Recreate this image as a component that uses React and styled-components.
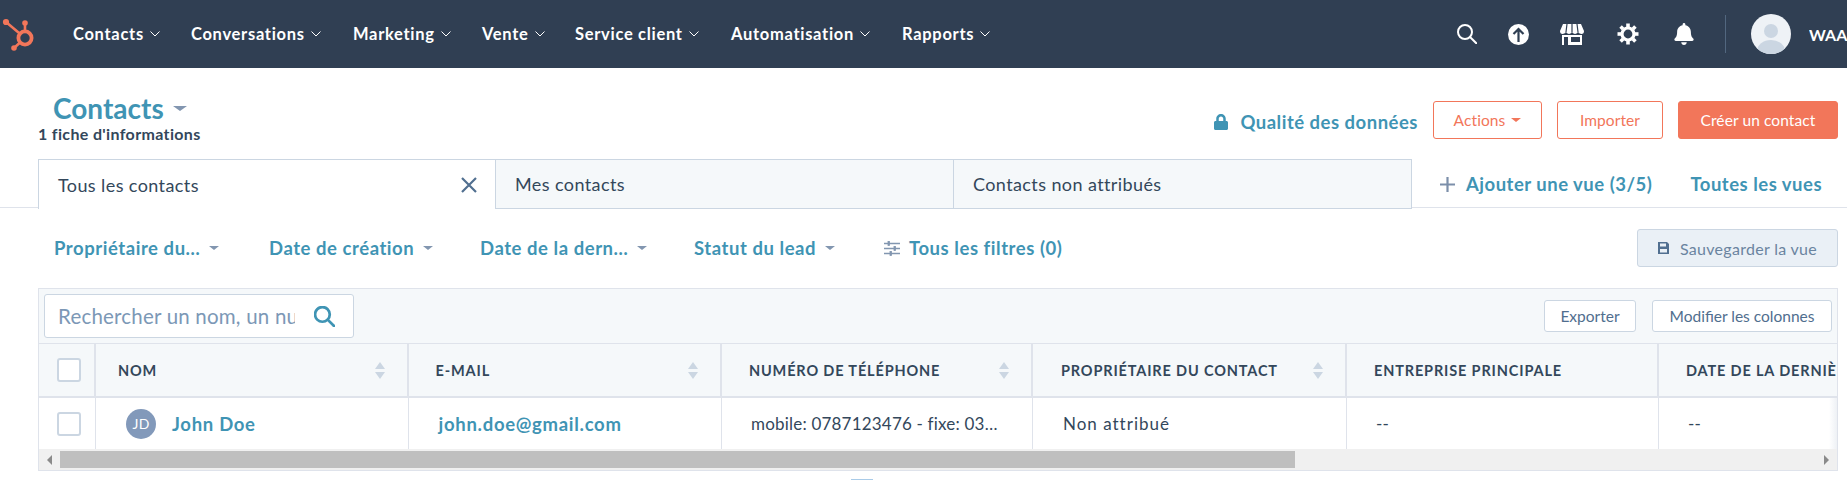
import React from 'react'
import styled, { createGlobalStyle } from 'styled-components'
import { FaBell, FaLock } from 'react-icons/fa'

const teal = '#3f94b4'
const coral = '#f2765a'
const slate = '#33475b'
const line = '#dfe3eb'
const edge = '#cbd6e2'
const font = '"Lato", "Noto Sans", sans-serif'

const GlobalStyle = createGlobalStyle`
  html, body {
    margin: 0;
    height: 481px;
    overflow: hidden;
    background: #fff;
    font-family: ${font};
    color: ${slate};
  }
`

const TopNav = styled.nav`
  display: flex;
  align-items: center;
  height: 68px;
  background: #303f53;
  color: #fff;
`

const LogoBox = styled.div`
  width: 73px;
  height: 68px;
  flex: none;
`

const NavItem = styled.a`
  display: flex;
  align-items: center;
  gap: 6px;
  width: ${p => p.$w}px;
  padding-bottom: 1px;
  font-size: 16.5px;
  font-weight: 700;
  letter-spacing: 0.7px;
  white-space: nowrap;
`

const NavIcons = styled.div`
  display: flex;
  align-items: center;
  margin-left: auto;
  height: 68px;
`

const NavIcon = styled.span`
  display: flex;
  justify-content: center;
  width: ${p => p.$w}px;
`

const NavDivider = styled.span`
  width: 1px;
  height: 38px;
  margin: 0 25px 0 13px;
  background: #52677f;
`

const UserAvatar = styled.span`
  display: block;
  width: 40px;
  height: 40px;
  border-radius: 50%;
  overflow: hidden;
  flex: none;
`

const UserName = styled.span`
  margin-left: 18px;
  width: 38px;
  overflow: hidden;
  font-size: 16px;
  font-weight: 700;
`

const PageHeader = styled.header`
  display: flex;
  justify-content: space-between;
  height: 91px;
  padding: 0 9px 0 38px;
`

const TitleBlock = styled.div`
  padding-top: 24px;
`

const Title = styled.h1`
  display: flex;
  align-items: center;
  gap: 9px;
  margin: 0 0 0 15px;
  height: 32px;
  font-size: 28px;
  font-weight: 700;
  color: ${teal};
`

const Caret = styled.span`
  display: inline-block;
  flex: none;
  width: 0;
  height: 0;
  border-left: ${p => p.$size}px solid transparent;
  border-right: ${p => p.$size}px solid transparent;
  border-top: ${p => p.$size * 0.8}px solid ${p => p.$color || '#8296b0'};
`

const RecordCount = styled.p`
  margin: 1px 0 0;
  font-size: 16px;
  font-weight: 700;
  letter-spacing: 0.35px;
  line-height: 18px;
`

const HeaderActions = styled.div`
  display: flex;
  align-items: flex-start;
  padding-top: 33px;
`

const QualityLink = styled.a`
  display: flex;
  align-items: center;
  gap: 11px;
  height: 42px;
  margin-right: 15px;
  font-size: 18.5px;
  font-weight: 700;
  letter-spacing: 0.5px;
  color: ${teal};
`

const CoralButton = styled.button`
  display: flex;
  align-items: center;
  justify-content: center;
  gap: 6px;
  width: ${p => p.$w}px;
  height: 38px;
  margin-left: ${p => p.$ml || 0}px;
  border: 1px solid ${coral};
  border-radius: 3px;
  background: ${p => (p.$solid ? coral : '#fff')};
  color: ${p => (p.$solid ? '#fff' : coral)};
  font-family: ${font};
  font-size: 15.5px;
  letter-spacing: 0.1px;
`

const TabBar = styled.div`
  display: flex;
  align-items: flex-start;
  height: 48px;
  padding-left: 38px;
  border-bottom: 1px solid ${line};
`

const Tab = styled.div`
  display: flex;
  align-items: center;
  justify-content: space-between;
  box-sizing: border-box;
  width: ${p => p.$w}px;
  height: 50px;
  padding: 0 18px 0 19px;
  border: 1px solid ${edge};
  border-left-width: ${p => (p.$active ? 1 : 0)}px;
  border-bottom-width: ${p => (p.$active ? 0 : 1)}px;
  background: ${p => (p.$active ? '#fff' : '#f5f8fa')};
  font-size: 18px;
  letter-spacing: 0.4px;
`

const TabActions = styled.div`
  display: flex;
  align-items: center;
  height: 50px;
  padding-left: 28px;
  font-size: 18.5px;
  font-weight: 700;
  letter-spacing: 0.5px;
  color: ${teal};
`

const AddView = styled.a`
  display: flex;
  align-items: center;
  gap: 11px;
  margin-right: 38px;
`

const FilterBar = styled.div`
  display: flex;
  align-items: center;
  height: 80px;
  padding: 0 9px 0 54px;
`

const Filter = styled.a`
  display: flex;
  align-items: center;
  gap: 9px;
  width: ${p => p.$w}px;
  font-size: 18.5px;
  font-weight: 700;
  letter-spacing: 0.55px;
  color: ${teal};
  white-space: nowrap;
`

const SaveButton = styled.button`
  display: flex;
  align-items: center;
  justify-content: center;
  gap: 11px;
  width: 201px;
  height: 38px;
  margin-left: auto;
  border: 1px solid ${edge};
  border-radius: 3px;
  background: #eaf0f6;
  color: #6a84a0;
  font-family: ${font};
  font-size: 16px;
  letter-spacing: 0.3px;
`

const TableCard = styled.section`
  margin: 0 9px 0 38px;
  border: 1px solid ${line};
  border-top-width: 1px;
`

const TableToolbar = styled.div`
  display: flex;
  align-items: center;
  justify-content: space-between;
  height: 54px;
  padding: 0 5px;
  background: #f5f8fa;
`

const SearchBox = styled.div`
  display: flex;
  align-items: center;
  justify-content: space-between;
  box-sizing: border-box;
  width: 310px;
  height: 44px;
  padding: 0 18px 0 13px;
  border: 1px solid ${edge};
  border-radius: 3px;
  background: #fff;
  color: #7c98b6;
  font-size: 20.5px;
  letter-spacing: 0.2px;
`

const SearchText = styled.span`
  width: 237px;
  overflow: hidden;
  white-space: nowrap;
`

const ToolButtons = styled.div`
  display: flex;
  gap: 16px;
`

const ToolButton = styled.button`
  width: ${p => p.$w}px;
  height: 32px;
  border: 1px solid ${edge};
  border-radius: 3px;
  background: #fff;
  color: #506e8e;
  font-family: ${font};
  font-size: 15.5px;
`

const Row = styled.div`
  display: grid;
  grid-template-columns: 57px 312.6px 313.4px 311px 314px 312px 1fr;
  height: ${p => p.$h}px;
  box-sizing: border-box;
`

const HeadRow = styled(Row)`
  border-top: 1px solid ${line};
  border-bottom: 2px solid ${line};
  background: #f5f8fa;
`

const HeadCell = styled.div`
  display: flex;
  align-items: center;
  justify-content: space-between;
  min-width: 0;
  overflow: hidden;
  box-sizing: border-box;
  padding: 0 22px 0 ${p => p.$pl || 27}px;
  border-right: ${p => (p.$last ? 0 : 2)}px solid ${line};
  font-size: 14.5px;
  font-weight: 700;
  letter-spacing: 0.85px;
  white-space: nowrap;
`

const Cell = styled.div`
  display: flex;
  align-items: center;
  gap: 16px;
  min-width: 0;
  overflow: hidden;
  box-sizing: border-box;
  padding-left: ${p => p.$pl || 29}px;
  border-right: ${p => (p.$last ? 0 : 1)}px solid ${line};
  background: ${p => (p.$last ? 'linear-gradient(to right, #fff 170px, #eef1f5)' : '#fff')};
  font-size: 17px;
  letter-spacing: ${p => p.$spacing || 0.2}px;
  white-space: nowrap;
`

const CheckCell = styled.div`
  display: flex;
  align-items: center;
  justify-content: center;
  border-right: ${p => p.$bw}px solid ${line};
`

const Checkbox = styled.span`
  display: block;
  box-sizing: border-box;
  width: 24px;
  height: 24px;
  margin-left: 4px;
  border: 2px solid ${edge};
  border-radius: 3px;
  background: #fff;
`

const SortArrows = styled.span`
  display: flex;
  flex-direction: column;
  gap: 3px;
  flex: none;
`

const SortArrow = styled.span`
  width: 0;
  height: 0;
  border-left: 5px solid transparent;
  border-right: 5px solid transparent;
  ${p => (p.$down ? `border-top: 7px solid ${edge};` : `border-bottom: 7px solid ${edge};`)}
`

const Initials = styled.span`
  display: flex;
  align-items: center;
  justify-content: center;
  width: 30px;
  height: 30px;
  border-radius: 50%;
  background: #8299ba;
  color: #fff;
  font-size: 14px;
`

const RecordLink = styled.a`
  font-weight: 700;
  font-size: 18.5px;
  letter-spacing: 0.7px;
  color: ${teal};
`

const ScrollBar = styled.div`
  display: flex;
  align-items: center;
  height: 21px;
  background: #f0f0f0;
`

const ScrollArrow = styled.span`
  flex: none;
  margin: ${p => p.$margin};
  border-top: 5px solid transparent;
  border-bottom: 5px solid transparent;
  ${p => (p.$right ? 'border-left: 5px solid #8a8a8a;' : 'border-right: 5px solid #8a8a8a;')}
`

const ScrollThumb = styled.span`
  width: 1235px;
  height: 17px;
  background: #bfbfbf;
`

const PagerTop = styled.div`
  width: 22px;
  height: 1px;
  margin: 8px 0 0 851px;
  background: #a9cbe8;
`

const HubLogo = () => (
  <svg width="40" height="68" viewBox="0 0 40 68" fill="#f2765a" stroke="#f2765a">
    <path d="M6 22 L25 38 M25 23 V32 M14 48 L25 38" strokeWidth="2.6" fill="none" />
    <circle cx="6" cy="22" r="3.1" stroke="none" />
    <circle cx="25" cy="23" r="2.8" stroke="none" />
    <circle cx="14" cy="48" r="2.8" stroke="none" />
    <circle cx="25" cy="38" r="6.6" fill="#303f53" strokeWidth="3.8" />
  </svg>
)

const SearchIcon = ({ size = 20, color = '#fff', width = 2 }) => (
  <svg width={size} height={size} viewBox="0 0 20 20" fill="none" stroke={color} strokeWidth={width}>
    <circle cx="8" cy="8" r="7" />
    <path d="M13 13 L19.5 19.5" strokeLinecap="round" />
  </svg>
)

const UploadIcon = () => (
  <svg width="21" height="21" viewBox="0 0 21 21">
    <circle cx="10.5" cy="10.5" r="10.5" fill="#fff" />
    <path d="M10.5 18 V5 M5.5 10 L10.5 5 L15.5 10" fill="none" stroke="#303f53" strokeWidth="2.2" />
  </svg>
)

const ShopIcon = () => (
  <svg width="24" height="21" viewBox="0 0 24 21" fill="#fff">
    <path d="M3 0 H21 L24 7 Q24 10 21.5 10 Q19.5 10 18 8 Q16.5 10 15 10 Q13.500 10 12 8 Q10.500 10 9 10 Q7.500 10 6 8 Q4.500 10 2.500 10 Q0 10 0 7 Z" />
    <path d="M7 0 L6 8 M12 0 V8 M17 0 L18 8" stroke="#303f53" strokeWidth="1.2" />
    <path fillRule="evenodd" d="M2 11 H22 V21 H2 Z M4 13 V21 H8 V13 Z M11 13 V18 H20 V13 Z" />
  </svg>
)

const GearIcon = () => (
  <svg width="22" height="22" viewBox="0 0 22 22" fill="none" stroke="#fff">
    <circle cx="11" cy="11" r="6" strokeWidth="3.2" />
    {[0, 45, 90, 135, 180, 225, 270, 315].map(a => (
      <path key={a} d="M11 0.500 V4" strokeWidth="3.6" transform={`rotate(${a} 11 11)`} />
    ))}
  </svg>
)

const PersonPicture = () => (
  <svg width="40" height="40" viewBox="0 0 40 40">
    <rect width="40" height="40" fill="#eef2f6" />
    <circle cx="20" cy="17" r="7" fill="#cbd6e2" />
    <ellipse cx="20" cy="37" rx="14" ry="11" fill="#cbd6e2" />
  </svg>
)

const CloseIcon = () => (
  <svg width="16" height="16" viewBox="0 0 16 16" stroke="#516f90" strokeWidth="2.2">
    <path d="M1 1 L15 15 M15 1 L1 15" />
  </svg>
)

const PlusIcon = () => (
  <svg width="15" height="15" viewBox="0 0 15 15" stroke="#7c8faa" strokeWidth="2.2">
    <path d="M7.5 0 V15 M0 7.5 H15" />
  </svg>
)

const SlidersIcon = () => (
  <svg width="16" height="15" viewBox="0 0 16 15" stroke="#8296b0" strokeWidth="1.6" fill="#8296b0">
    <path d="M0 2.500 H16 M0 7.500 H16 M0 12.500 H16" />
    <rect x="4" y="0.500" width="1.500" height="4" strokeWidth="0.800" />
    <rect x="10" y="5.500" width="1.500" height="4" strokeWidth="0.800" />
    <rect x="6" y="10.500" width="1.500" height="4" strokeWidth="0.800" />
  </svg>
)

const SaveIcon = () => (
  <svg width="11" height="12" viewBox="0 0 11 12" fill="#516f90">
    <path fillRule="evenodd" d="M0 0 H9 L11 2 V12 H0 Z M2 1.500 V4.500 H8 V1.500 Z M2 7 V10.500 H9 V7 Z" />
  </svg>
)

const navItems = [
  ['Contacts', 118],
  ['Conversations', 162],
  ['Marketing', 129],
  ['Vente', 93],
  ['Service client', 156],
  ['Automatisation', 171],
  ['Rapports', 120],
]

const filters = [
  ['Propriétaire du…', 215],
  ['Date de création', 211],
  ['Date de la dern…', 214],
  ['Statut du lead', 190],
]

const columns = [
  { label: 'Nom', sort: true, pl: 22 },
  { label: 'E-mail', sort: true },
  { label: 'Numéro de téléphone', sort: true },
  { label: 'Propriétaire du contact', sort: true, pl: 28 },
  { label: 'Entreprise principale' },
  { label: 'Date de la dernière activité', last: true },
]

const NavChevron = () => (
  <svg width="10" height="6" viewBox="0 0 10 6" fill="none" stroke="#fff">
    <path d="M0.500 0.500 L5 5 L9.500 0.500" />
  </svg>
)

const App = () => (
  <>
    <GlobalStyle />
    <TopNav>
      <LogoBox>
        <HubLogo />
      </LogoBox>
      {navItems.map(([label, w]) => (
        <NavItem key={label} $w={w}>
          {label}
          <NavChevron />
        </NavItem>
      ))}
      <NavIcons>
        <NavIcon $w={51}><SearchIcon /></NavIcon>
        <NavIcon $w={52}><UploadIcon /></NavIcon>
        <NavIcon $w={56}><ShopIcon /></NavIcon>
        <NavIcon $w={56}><GearIcon /></NavIcon>
        <NavIcon $w={56}><FaBell size={22} /></NavIcon>
        <NavDivider />
        <UserAvatar><PersonPicture /></UserAvatar>
        <UserName>WAA</UserName>
      </NavIcons>
    </TopNav>

    <PageHeader>
      <TitleBlock>
        <Title>
          Contacts
          <Caret $size={7} />
        </Title>
        <RecordCount>1 fiche d'informations</RecordCount>
      </TitleBlock>
      <HeaderActions>
        <QualityLink>
          <FaLock size={16} />
          Qualité des données
        </QualityLink>
        <CoralButton $w={109}>
          Actions
          <Caret $size={5} $color={coral} />
        </CoralButton>
        <CoralButton $w={106} $ml={15}>Importer</CoralButton>
        <CoralButton $w={160} $ml={15} $solid>Créer un contact</CoralButton>
      </HeaderActions>
    </PageHeader>

    <TabBar>
      <Tab $w={458} $active>
        Tous les contacts
        <CloseIcon />
      </Tab>
      <Tab $w={458}>Mes contacts</Tab>
      <Tab $w={458}>Contacts non attribués</Tab>
      <TabActions>
        <AddView>
          <PlusIcon />
          Ajouter une vue (3/5)
        </AddView>
        <a>Toutes les vues</a>
      </TabActions>
    </TabBar>

    <FilterBar>
      {filters.map(([label, w]) => (
        <Filter key={label} $w={w}>
          {label}
          <Caret $size={5} />
        </Filter>
      ))}
      <Filter>
        <SlidersIcon />
        Tous les filtres (0)
      </Filter>
      <SaveButton>
        <SaveIcon />
        Sauvegarder la vue
      </SaveButton>
    </FilterBar>

    <TableCard>
      <TableToolbar>
        <SearchBox>
          <SearchText>Rechercher un nom, un nu</SearchText>
          <SearchIcon size={21} color={teal} width={2.6} />
        </SearchBox>
        <ToolButtons>
          <ToolButton $w={92}>Exporter</ToolButton>
          <ToolButton $w={180}>Modifier les colonnes</ToolButton>
        </ToolButtons>
      </TableToolbar>

      <HeadRow $h={55}>
        <CheckCell $bw={2}><Checkbox /></CheckCell>
        {columns.map(col => (
          <HeadCell key={col.label} $pl={col.pl} $last={col.last}>
            {col.label.toUpperCase()}
            {col.sort && (
              <SortArrows>
                <SortArrow />
                <SortArrow $down />
              </SortArrows>
            )}
          </HeadCell>
        ))}
      </HeadRow>

      <Row $h={51}>
        <CheckCell $bw={1}><Checkbox /></CheckCell>
        <Cell $pl={30}>
          <Initials>JD</Initials>
          <RecordLink>John Doe</RecordLink>
        </Cell>
        <Cell $pl={30}><RecordLink>john.doe@gmail.com</RecordLink></Cell>
        <Cell>mobile: 0787123476 - fixe: 03…</Cell>
        <Cell $pl={30} $spacing={1}>Non attribué</Cell>
        <Cell>--</Cell>
        <Cell $last>--</Cell>
      </Row>

      <ScrollBar>
        <ScrollArrow $margin="0 8px 0 8px" />
        <ScrollThumb />
        <ScrollArrow $right $margin="0 8px 0 auto" />
      </ScrollBar>
    </TableCard>
    <PagerTop />
  </>
)

export default App
